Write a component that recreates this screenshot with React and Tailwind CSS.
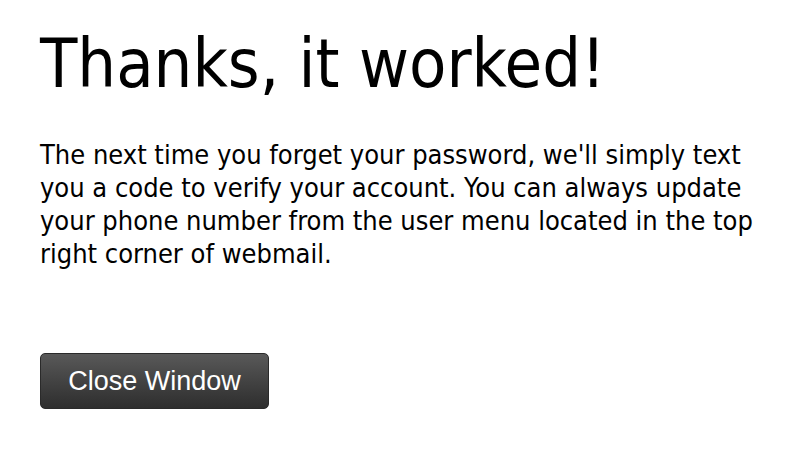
import React from "react";

export default function App() {
  return (
    <div className="min-h-screen bg-white px-10 pt-[16px] font-['DejaVu_Sans_Condensed','DejaVu_Sans',sans-serif] text-black">
      <h1 className="text-[68px] leading-[96px] font-normal">Thanks, it worked!</h1>

      <p className="mt-[26px] text-[27px] leading-[33px] w-[722px]">
        The next time you forget your password, we'll simply text you a code to verify your account. You can always
        update your phone number from the user menu located in the top right corner of webmail.
      </p>

      <button className="mt-[83px] w-[229px] h-[56px] rounded-[5px] border border-[#2a2a2a] bg-gradient-to-b from-[#595959] to-[#2e2e2e] text-white text-[27px] font-['Liberation_Sans',Arial,sans-serif]">
        Close Window
      </button>
    </div>
  );
}
